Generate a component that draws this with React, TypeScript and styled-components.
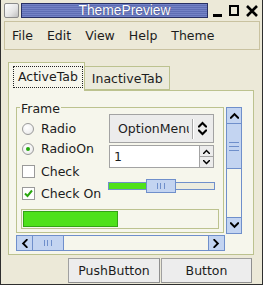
import React from 'react';
import styled, { createGlobalStyle } from 'styled-components';

const GlobalStyle = createGlobalStyle`
  html, body {
    margin: 0;
    padding: 0;
    background: #ece9d8;
  }
  body {
    font-family: "DejaVu Sans", "Liberation Sans", sans-serif;
    font-size: 12.5px;
    color: #1c1c1c;
  }
`;

const olive = '#bcc28f';
const panelBg = '#f6f6ec';
const blue = '#6f8fcb';
const blueFill = '#c3d4f1';
const green = '#4ee11a';

const Window = styled.div`
  width: 263px;
  height: 285px;
  box-sizing: border-box;
  border: 1px solid #2e2e2e;
  border-top: none;
  background: #ece9d8;
  display: flex;
  flex-direction: column;
`;

const TitleBar = styled.div`
  height: 21px;
  display: flex;
  align-items: center;
  padding-left: 3px;
`;

const AppIcon = styled.div`
  width: 15px;
  height: 15px;
  box-sizing: border-box;
  border: 1px solid #8a8a8a;
  border-radius: 2px;
  background: linear-gradient(135deg, #ffffff 0%, #e4e4e4 60%, #bdbdbd 100%);
`;

const TitleStrip = styled.div`
  width: 187px;
  height: 15px;
  margin-left: 2px;
  box-sizing: border-box;
  border: 1px solid #283063;
  background: repeating-linear-gradient(to bottom, #7483c6 0 1px, #5f6eb4 1px 2px);
  color: #fff;
  font-family: "Liberation Sans", Arial, sans-serif;
  font-size: 13.8px;
  line-height: 13px;
  padding-left: 20px;
  text-align: center;
  text-shadow: 0 0 1px #27306a;
`;

const Controls = styled.div`
  display: flex;
  align-items: center;
  margin-left: 5px;
  gap: 6px;
`;

const MenuBar = styled.div`
  height: 29px;
  margin: 0 2px 0 3px;
  box-sizing: border-box;
  border: 1px solid #c9c2a0;
  display: flex;
  align-items: center;
`;

const MenuItem = styled.span`
  padding: 0 7px;
  line-height: 15px;
`;

const TabArea = styled.div`
  margin: 12px 0 0 7px;
  width: 246px;
`;

const TabRow = styled.div`
  display: flex;
  align-items: flex-end;
  height: 28px;
`;

const Tab = styled.div<{ $active?: boolean }>`
  box-sizing: border-box;
  height: ${(p) => (p.$active ? '29px' : '24px')};
  margin-bottom: ${(p) => (p.$active ? '-1px' : '0')};
  border: 1px solid ${olive};
  border-bottom: ${(p) => (p.$active ? 'none' : `1px solid ${olive}`)};
  border-left: ${(p) => (p.$active ? `1px solid ${olive}` : 'none')};
  background: ${(p) => (p.$active ? panelBg : '#ebeadb')};
  padding: ${(p) => (p.$active ? '3px 1px 0 4px' : '0 6px 0 7px')};
  display: flex;
  align-items: ${(p) => (p.$active ? 'flex-start' : 'center')};
  position: relative;
  z-index: 1;
`;

const FocusRing = styled.span`
  border: 1px dotted #222;
  padding: 2px 4px 3px 4px;
  line-height: 15px;
`;

const Panel = styled.div`
  height: 165px;
  box-sizing: border-box;
  border: 1px solid ${olive};
  background: ${panelBg};
  padding: 16px 0 0 7px;
  display: grid;
  grid-template-columns: 209px 16px;
  grid-template-rows: 127px 16px;
  column-gap: 1px;
  row-gap: 1px;
`;

const Frame = styled.div`
  position: relative;
  box-sizing: border-box;
  margin: 0 1px 1px 0;
  border: 1px solid ${olive};
  display: flex;
  flex-direction: column;
  padding: 0 4px 2px 4px;
`;

const Legend = styled.span`
  position: absolute;
  left: 3px;
  top: -7px;
  padding: 0 1px;
  background: ${panelBg};
  line-height: 15px;
`;

const FrameTop = styled.div`
  display: flex;
  height: 96px;
`;

const LeftCol = styled.div`
  width: 88px;
  padding-top: 11px;
  display: flex;
  flex-direction: column;
`;

const OptionRow = styled.div<{ $h: number; $gap: number }>`
  height: ${(p) => p.$h}px;
  display: flex;
  align-items: center;
  gap: ${(p) => p.$gap}px;
  padding-left: 1px;
`;

const RadioDot = styled.span<{ $on?: boolean }>`
  width: 12px;
  height: 12px;
  box-sizing: border-box;
  border-radius: 50%;
  border: 1px solid #9a9a9a;
  background: radial-gradient(circle at 40% 35%, #ffffff 0%, #f1f1f1 60%, #d9d9d9 100%);
  display: flex;
  align-items: center;
  justify-content: center;
  &::after {
    content: '';
    display: ${(p) => (p.$on ? 'block' : 'none')};
    width: 4px;
    height: 4px;
    border-radius: 50%;
    background: #24a80c;
  }
`;

const CheckBox = styled.span`
  width: 13px;
  height: 13px;
  box-sizing: border-box;
  border: 1px solid #9a9a9a;
  background: #fff;
  display: flex;
  align-items: center;
  justify-content: center;
`;

const RightCol = styled.div`
  width: 105px;
  padding-top: 6px;
  display: flex;
  flex-direction: column;
`;

const OptionMenu = styled.div`
  height: 29px;
  box-sizing: border-box;
  border: 1px solid #a3a3a3;
  background: #ececec;
  display: flex;
  align-items: center;
  padding-left: 8px;
`;

const OptionText = styled.span`
  width: 71px;
  overflow: hidden;
  white-space: nowrap;
`;

const OptionSep = styled.span`
  width: 1px;
  height: 20px;
  margin: 0 5px 0 3px;
  background: #a8a8a8;
  box-shadow: 1px 0 0 #fff;
`;

const SpinBox = styled.div`
  display: flex;
  height: 23px;
  margin-top: 2px;
`;

const SpinEntry = styled.div`
  width: 90px;
  box-sizing: border-box;
  border: 1px solid #a3a3a3;
  border-right: none;
  background: #fff;
  padding-left: 4px;
  display: flex;
  align-items: center;
`;

const SpinButtons = styled.div`
  width: 15px;
  display: flex;
  flex-direction: column;
`;

const SpinButton = styled.div`
  flex: 1;
  box-sizing: border-box;
  border: 1px solid #a3a3a3;
  border-top-width: ${(p: { $first?: boolean }) => (p.$first ? '1px' : '0')};
  background: #ececec;
  display: flex;
  align-items: center;
  justify-content: center;
`;

const Slider = styled.div`
  position: relative;
  margin: 11px -1px 0 -1px;
  height: 14px;
  display: flex;
  align-items: center;
`;

const SliderTrough = styled.div`
  flex: 1;
  height: 8px;
  box-sizing: border-box;
  border: 1px solid ${blue};
  background: #ececdf;
  display: flex;
`;

const SliderFill = styled.div`
  background: ${green};
`;

const SliderThumb = styled.div`
  position: absolute;
  top: 0;
  width: 30px;
  height: 14px;
  box-sizing: border-box;
  border: 1px solid ${blue};
  background: ${blueFill};
  display: flex;
  align-items: center;
  justify-content: center;
`;

const Progress = styled.div`
  margin: 5px 0 0 0;
  height: 20px;
  box-sizing: border-box;
  border: 1px solid ${olive};
  padding: 1px;
  display: flex;
`;

const ProgressFill = styled.div`
  box-sizing: border-box;
  background: ${green};
  border: 1px solid #33a314;
`;

const ScrollBar = styled.div<{ $vertical?: boolean }>`
  box-sizing: border-box;
  border: 1px solid ${blue};
  background: ${panelBg};
  display: flex;
  flex-direction: ${(p) => (p.$vertical ? 'column' : 'row')};
  justify-content: space-between;
`;

const ScrollStepper = styled.div<{ $vertical?: boolean }>`
  ${(p) => (p.$vertical ? 'height: 15px;' : 'width: 15px;')}
  background: ${blueFill};
  display: flex;
  align-items: center;
  justify-content: center;
`;

const ScrollTrack = styled.div<{ $vertical?: boolean }>`
  flex: 1;
  display: flex;
  flex-direction: ${(p) => (p.$vertical ? 'column' : 'row')};
  border-${(p) => (p.$vertical ? 'top' : 'left')}: 1px solid ${blue};
  border-${(p) => (p.$vertical ? 'bottom' : 'right')}: 1px solid ${blue};
`;

const ScrollThumb = styled.div<{ $vertical?: boolean }>`
  ${(p) => (p.$vertical ? 'height: 44px;' : 'width: 30px;')}
  background: ${blueFill};
  border-${(p) => (p.$vertical ? 'bottom' : 'right')}: 1px solid ${blue};
  display: flex;
  align-items: center;
  justify-content: center;
`;

const ButtonRow = styled.div`
  display: flex;
  justify-content: flex-end;
  gap: 1px;
  margin: 3px 10px 0 0;
`;

const PushButton = styled.button<{ $w: number }>`
  width: ${(p) => p.$w}px;
  height: 25px;
  box-sizing: border-box;
  border: 1px solid #a0a0a0;
  border-right-color: #8f8f8f;
  border-bottom-color: #8f8f8f;
  background: #ededed;
  font: inherit;
  color: #1c1c1c;
  padding: 0;
`;

type Dir = 'up' | 'down' | 'left' | 'right';

const Chevron: React.FC<{ dir: Dir; size?: number }> = ({ dir, size = 9 }) => {
  const rot = { up: 0, right: 90, down: 180, left: 270 }[dir];
  return (
    <svg width={size} height={size} viewBox="0 0 10 10">
      <g transform={`rotate(${rot} 5 5)`}>
        <polygon points="0,7 5,2 10,7 10,8.5 8.5,8.5 5,5 1.5,8.5 0,8.5" fill="#000" />
      </g>
    </svg>
  );
};

const Grip: React.FC<{ vertical?: boolean }> = ({ vertical }) => (
  <svg width={10} height={vertical ? 10 : 8} viewBox={vertical ? '0 0 10 10' : '0 0 10 8'}>
    {vertical ? (
      <g stroke="#6f8fcb" strokeWidth="1">
        <line x1="0" y1="1.5" x2="10" y2="1.5" />
        <line x1="0" y1="5.5" x2="10" y2="5.5" />
        <line x1="0" y1="9.5" x2="10" y2="9.5" />
      </g>
    ) : (
      <g stroke="#6f8fcb" strokeWidth="1">
        <line x1="1.5" y1="1" x2="1.5" y2="7" />
        <line x1="4.5" y1="1" x2="4.5" y2="7" />
        <line x1="8.5" y1="1" x2="8.5" y2="7" />
      </g>
    )}
  </svg>
);

const App: React.FC = () => {
  return (
    <>
      <GlobalStyle />
      <Window>
        <TitleBar>
          <AppIcon />
          <TitleStrip>ThemePreview</TitleStrip>
          <Controls>
            <svg width="10" height="12" viewBox="0 0 10 12">
              <rect x="0" y="9" width="9" height="3" fill="#000" />
            </svg>
            <svg width="10" height="12" viewBox="0 0 10 12">
              <rect x="1" y="1" width="8" height="9" fill="none" stroke="#000" strokeWidth="2" />
            </svg>
            <svg width="12" height="12" viewBox="0 0 12 12" style={{ marginLeft: 1 }}>
              <path d="M1 1 L11 11 M11 1 L1 11" stroke="#000" strokeWidth="2.6" />
            </svg>
          </Controls>
        </TitleBar>
        <MenuBar>
          <MenuItem>File</MenuItem>
          <MenuItem>Edit</MenuItem>
          <MenuItem>View</MenuItem>
          <MenuItem>Help</MenuItem>
          <MenuItem>Theme</MenuItem>
        </MenuBar>
        <TabArea>
          <TabRow>
            <Tab $active>
              <FocusRing>ActiveTab</FocusRing>
            </Tab>
            <Tab>InactiveTab</Tab>
          </TabRow>
          <Panel>
            <Frame>
              <Legend>Frame</Legend>
              <FrameTop>
                <LeftCol>
                  <OptionRow $h={20} $gap={7}>
                    <RadioDot />
                    Radio
                  </OptionRow>
                  <OptionRow $h={20} $gap={7}>
                    <RadioDot $on />
                    RadioOn
                  </OptionRow>
                  <OptionRow $h={23} $gap={6} style={{ paddingTop: 2 }}>
                    <CheckBox />
                    Check
                  </OptionRow>
                  <OptionRow $h={21} $gap={6}>
                    <CheckBox>
                      <svg width="9" height="9" viewBox="0 0 9 9">
                        <path d="M1 4.5 L3.5 7 L8 1.5" fill="none" stroke="#2aa70f" strokeWidth="2" />
                      </svg>
                    </CheckBox>
                    Check On
                  </OptionRow>
                </LeftCol>
                <RightCol>
                  <OptionMenu>
                    <OptionText>OptionMenu</OptionText>
                    <OptionSep />
                    <svg width="9" height="17" viewBox="0 0 9 17">
                      <polygon points="0,6 4.5,1.5 9,6 9,7.5 7.5,7.5 4.5,4.5 1.5,7.5 0,7.5" fill="#000" />
                      <polygon points="0,11 4.5,15.5 9,11 9,9.5 7.5,9.5 4.5,12.5 1.5,9.5 0,9.5" fill="#000" />
                    </svg>
                  </OptionMenu>
                  <SpinBox>
                    <SpinEntry>1</SpinEntry>
                    <SpinButtons>
                      <SpinButton $first>
                        <Chevron dir="up" size={7} />
                      </SpinButton>
                      <SpinButton>
                        <Chevron dir="down" size={7} />
                      </SpinButton>
                    </SpinButtons>
                  </SpinBox>
                  <Slider>
                    <SliderTrough>
                      <SliderFill style={{ width: 38 }} />
                    </SliderTrough>
                    <SliderThumb style={{ left: 38 }}>
                      <Grip />
                    </SliderThumb>
                  </Slider>
                </RightCol>
              </FrameTop>
              <Progress>
                <ProgressFill style={{ width: '49%' }} />
              </Progress>
            </Frame>
            <ScrollBar $vertical>
              <ScrollStepper $vertical>
                <Chevron dir="up" />
              </ScrollStepper>
              <ScrollTrack $vertical>
                <ScrollThumb $vertical>
                  <Grip vertical />
                </ScrollThumb>
              </ScrollTrack>
              <ScrollStepper $vertical>
                <Chevron dir="down" />
              </ScrollStepper>
            </ScrollBar>
            <ScrollBar>
              <ScrollStepper>
                <Chevron dir="left" />
              </ScrollStepper>
              <ScrollTrack>
                <ScrollThumb>
                  <Grip />
                </ScrollThumb>
              </ScrollTrack>
              <ScrollStepper>
                <Chevron dir="right" />
              </ScrollStepper>
            </ScrollBar>
          </Panel>
        </TabArea>
        <ButtonRow>
          <PushButton $w={92}>PushButton</PushButton>
          <PushButton $w={91}>Button</PushButton>
        </ButtonRow>
      </Window>
    </>
  );
};

export default App;
